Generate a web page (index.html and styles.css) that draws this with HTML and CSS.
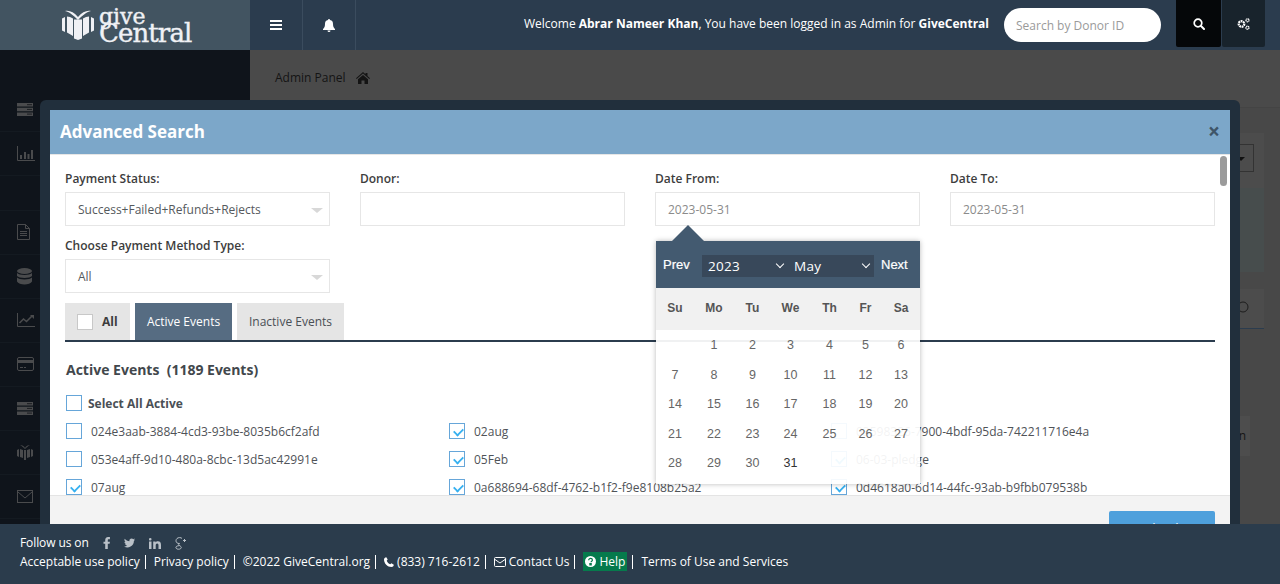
FILE: index.html
```html
<!DOCTYPE html>
<html lang="en">
<head>
<meta charset="utf-8">
<title>Advanced Search</title>
<link rel="stylesheet" href="styles.css">
</head>
<body>
<div class="page">
  <header class="topbar">
    <div class="brand">
      <svg class="brand-icon" width="32" height="30" viewBox="0 0 32 30"><path d="M3 1C7 0 12 2 16 7 20 2 25 0 29 1 24 2 20 6 16 10 12 6 8 2 3 1Z" fill="#f0f1f5"/><path d="M0 8.500 3 7v15l-3-1.500ZM5 6.500c2 0 4 .7 6 2V26l-6-3.500ZM12 9.500h8V28.500L16 30l-4-1.500ZM21 8.500c2-1.300 4-2 6-2v16L21 26ZM29 7l3 1.500v12L29 22Z" fill="#f0f1f5"/></svg>
      <div class="wordmark"><span>give</span><span class="central">Central</span></div>
    </div>
    <button class="tbtn"><svg width="12" height="12" viewBox="0 0 12 12"><path d="M0 1h12v2H0zM0 5h12v2H0zM0 9h12v2H0z" fill="#fff"/></svg></button>
    <button class="tbtn"><svg width="12" height="13" viewBox="0 0 12 13"><path d="M6 0a1 1 0 0 1 1 1c2.200.300 3 2 3 4 0 3 1 4 2 5v1H0v-1c1-1 2-2 2-5 0-2 .8-3.700 3-4a1 1 0 0 1 1-1ZM4.500 11.500h3a1.500 1.500 0 0 1-3 0Z" fill="#fff"/></svg></button>
    <div class="welcome">Welcome <b>Abrar Nameer Khan</b>, You have been logged in as Admin for <b>GiveCentral</b></div>
    <div class="donor-search">Search by Donor ID</div>
    <button class="sq sq-dark"><svg width="12" height="12" viewBox="0 0 12 12"><circle cx="5" cy="5" r="3.800" fill="none" stroke="#fff" stroke-width="1.700"/><path d="M8 8l3 3" stroke="#fff" stroke-width="2" stroke-linecap="round"/></svg></button>
    <button class="sq sq-mid"><svg width="13" height="12" viewBox="0 0 13 12"><circle cx="4.500" cy="6" r="2.800" fill="none" stroke="#fff" stroke-width="2.200" stroke-dasharray="1.800 .6"/><circle cx="10.500" cy="2.300" r="1.500" fill="none" stroke="#fff" stroke-width="1.300" stroke-dasharray="1.300 .4"/><circle cx="10.500" cy="9.700" r="1.500" fill="none" stroke="#fff" stroke-width="1.300" stroke-dasharray="1.300 .4"/></svg></button>
  </header>

  <div class="main">
    <aside class="sidebar">
      <div class="side-item"><svg width="16" height="13" viewBox="0 0 16 13"><path d="M0 0h16v3.500H0zM0 4.700h16v3.500H0zM0 9.400h16V13H0z" fill="#4a4b4d"/><path d="M10 1.700h5M10 6.400h5M10 11.100h5" stroke="#1a1d21"/></svg></div>
      <div class="side-item"><svg width="18" height="15" viewBox="0 0 18 15"><path d="M.5 0v14.500H18" fill="none" stroke="#4a4b4d"/><path d="M3 9h2v4H3zM7 6h2v7H7zM10.500 8h2v5h-2zM14 4h2v9h-2z" fill="#4a4b4d"/></svg></div>
      <div class="side-gap"></div>
      <div class="side-item"><svg width="13" height="16" viewBox="0 0 13 16"><path d="M.5.500h8l4 4v11H.5zM8.500.500v4h4M3 7.500h7M3 9.500h7M3 11.500h7" fill="none" stroke="#4a4b4d"/></svg></div>
      <div class="side-item"><svg width="15" height="17" viewBox="0 0 15 17"><ellipse cx="7.500" cy="3" rx="7.500" ry="3" fill="#4a4b4d"/><path d="M0 5c2 2.500 13 2.500 15 0v3c-2 2.500-13 2.500-15 0ZM0 9.500c2 2.500 13 2.500 15 0v4c-2 4-13 4-15 0Z" fill="#4a4b4d"/></svg></div>
      <div class="side-item"><svg width="18" height="14" viewBox="0 0 18 14"><path d="M.5 0v13.500H18" fill="none" stroke="#4a4b4d"/><path d="M2.500 10l4-4 3 2.500L15 3" fill="none" stroke="#4a4b4d" stroke-width="1.600"/><path d="M13 2h4v4z" fill="#4a4b4d"/></svg></div>
      <div class="side-item"><svg width="17" height="14" viewBox="0 0 17 14"><rect x=".5" y=".5" width="16" height="13" rx="1.500" fill="none" stroke="#4a4b4d"/><path d="M1 3h15v3H1zM3 10h3v1H3zM7 10h2v1H7z" fill="#4a4b4d"/></svg></div>
      <div class="side-item"><svg width="16" height="13" viewBox="0 0 16 13"><path d="M0 0h16v3.500H0zM0 4.700h16v3.500H0zM0 9.400h16V13H0z" fill="#4a4b4d"/><path d="M10 1.700h5M10 6.400h5M10 11.100h5" stroke="#1a1d21"/></svg></div>
      <div class="side-item"><svg width="16" height="16" viewBox="0 0 16 16"><path d="M3 1c2 0 4 1 5 3 1-2 3-3 5-3-2 1-3 2-5 4-2-2-3-3-5-4ZM0 6l2-1v8l-2-1ZM3 5l3 1v8l-3-1ZM7 6h2v10H7ZM10 6l3-1v8l-3 1ZM14 5l2 1v6l-2 1Z" fill="#4a4b4d"/></svg></div>
      <div class="side-item"><svg width="16" height="13" viewBox="0 0 16 13"><rect x=".5" y=".5" width="15" height="12" fill="none" stroke="#4a4b4d"/><path d="M1 2l7 6 7-6" fill="none" stroke="#4a4b4d"/></svg></div>
    </aside>
    <main class="content">
      <div class="crumb">Admin Panel <svg width="14" height="12" viewBox="0 0 14 12"><path d="M7 0l2.500 2.200V1h2v3l2.500 2.300-.7.700L7 1.600.7 7 0 6.300ZM2 7.200 7 3l5 4.200V12H8.500V8.500h-3V12H2Z" fill="#141414"/></svg></div>
      <div class="bg-panel bg-filter"><div class="bg-select"><i></i></div></div>
      <div class="bg-panel bg-stats"></div>
      <div class="bg-panel bg-tabs"><svg width="12" height="12" viewBox="0 0 12 12"><circle cx="6" cy="6" r="5" fill="none" stroke="#1c1c1c"/></svg></div>
      <div class="bg-btn">n</div>
    </main>
  </div>

  <section class="modal-frame">
    <div class="modal">
      <div class="modal-head">
        <h2>Advanced Search</h2>
        <span class="close">×</span>
      </div>
      <div class="modal-body">
        <div class="filters">
          <div class="field"><label>Payment Status:</label><div class="select">Success+Failed+Refunds+Rejects</div></div>
          <div class="field"><label>Donor:</label><div class="input"></div></div>
          <div class="field"><label>Date From:</label><div class="input muted">2023-05-31</div></div>
          <div class="field"><label>Date To:</label><div class="input muted">2023-05-31</div></div>
          <div class="field"><label>Choose Payment Method Type:</label><div class="select">All</div></div>
        </div>
        <div class="tabs">
          <div class="tab tab-all"><span class="box-gray"></span><b>All</b></div>
          <div class="tab tab-on">Active Events</div>
          <div class="tab tab-off">Inactive Events</div>
        </div>
        <h3 class="events-title">Active Events&nbsp; (1189 Events)</h3>
        <div class="select-all"><span class="cb"></span><b>Select All Active</b></div>
        <div class="events">
          <div class="ev"><span class="cb"></span>024e3aab-3884-4cd3-93be-8035b6cf2afd</div>
          <div class="ev"><span class="cb on"></span>02aug</div>
          <div class="ev"><span class="cb"></span>03598326-7900-4bdf-95da-742211716e4a</div>
          <div class="ev"><span class="cb"></span>053e4aff-9d10-480a-8cbc-13d5ac42991e</div>
          <div class="ev"><span class="cb on"></span>05Feb</div>
          <div class="ev"><span class="cb on"></span>06-03-pledge</div>
          <div class="ev"><span class="cb on"></span>07aug</div>
          <div class="ev"><span class="cb on"></span>0a688694-68df-4762-b1f2-f9e8108b25a2</div>
          <div class="ev"><span class="cb on"></span>0d4618a0-6d14-44fc-93ab-b9fbb079538b</div>
        </div>
        <div class="scroll-thumb"></div>
      </div>
      <div class="modal-foot"><button class="apply">Apply Filter</button></div>
    </div>

    <div class="calendar">
      <div class="cal-arrow"></div>
      <div class="cal-head">
        <span class="cal-nav">Prev</span>
        <div class="cal-selects">
          <span class="cal-sel">2023<i class="chev"></i></span>
          <span class="cal-sel">May<i class="chev"></i></span>
        </div>
        <span class="cal-nav">Next</span>
      </div>
      <div class="cal-dow"><span>Su</span><span>Mo</span><span>Tu</span><span>We</span><span>Th</span><span>Fr</span><span>Sa</span></div>
      <div class="cal-grid">
        <span></span><span>1</span><span>2</span><span>3</span><span>4</span><span>5</span><span>6</span>
        <span>7</span><span>8</span><span>9</span><span>10</span><span>11</span><span>12</span><span>13</span>
        <span>14</span><span>15</span><span>16</span><span>17</span><span>18</span><span>19</span><span>20</span>
        <span>21</span><span>22</span><span>23</span><span>24</span><span>25</span><span>26</span><span>27</span>
        <span>28</span><span>29</span><span>30</span><span class="today">31</span>
      </div>
    </div>
  </section>

  <footer class="footer">
    <div class="follow">Follow us on
      <svg class="soc" width="7" height="12" viewBox="0 0 8 14"><path d="M2.500 14V8H.5V5.500h2V3.500C2.500 1 4 0 5.800 0H8v2.500H6.500c-.8 0-1 .4-1 1v2H8L7.600 8H5.500v6Z" fill="#b9c0c7"/></svg>
      <svg class="soc" width="11" height="10" viewBox="0 0 13 11"><path d="M13 1.300c-.5.2-1 .4-1.500.4.500-.3 1-.8 1.200-1.400-.5.300-1.100.5-1.700.7a2.700 2.700 0 0 0-4.600 2.400C4.200 3.300 2.300 2.300.9.600c-.7 1.200-.4 2.800.8 3.600-.4 0-.8-.1-1.200-.3 0 1.300.9 2.400 2.100 2.700-.4.100-.8.100-1.200 0 .3 1.100 1.300 1.800 2.500 1.900A5.400 5.400 0 0 1 0 9.600 7.700 7.700 0 0 0 11.700 3c.5-.4 1-.9 1.300-1.700Z" fill="#b9c0c7"/></svg>
      <svg class="soc" width="12" height="11" viewBox="0 0 12 11"><path d="M0 3.500h2.500V11H0ZM1.250 0a1.300 1.300 0 1 1 0 2.600 1.300 1.300 0 0 1 0-2.600ZM4.200 3.500h2.400v1c.4-.7 1.200-1.200 2.300-1.200C11.300 3.300 12 4.800 12 7v4H9.500V7.500c0-1-.3-1.900-1.300-1.900-1.100 0-1.500.9-1.500 1.900V11H4.200Z" fill="#b9c0c7"/></svg>
      <svg class="soc" width="12" height="13" viewBox="0 0 12 13"><path d="M7 1.500C6.600.9 5.800.6 4.500.6 2.500.6 1 2 1 3.700s1.300 2.800 3 2.800c.2 0 .4 0 .5-.1M4.500 6.500c-1 .6-1 1.300 0 2 1.300.9 2 1.400 1.700 2.400-.4 1.200-2.500 1.600-4 1.100-1.400-.5-1.700-1.800-.7-2.600.8-.6 1.900-.8 3-.7M9.500 2v3M8 3.500h3" fill="none" stroke="#b9c0c7"/></svg>
    </div>
    <div class="links">
      <a>Acceptable use policy</a><a>Privacy policy</a><a>©2022 GiveCentral.org</a>
      <a><svg width="10" height="10" viewBox="0 0 10 10"><path d="M2.300.2 3.700 2.600 2.700 3.700c.6 1.500 2 3 3.600 3.600l1.100-1 2.400 1.400C9.700 9 8.600 10 7.500 10 3.500 10 0 6.500 0 2.500 0 1.400 1 .3 2.300.2Z" fill="#fff"/></svg> (833) 716-2612</a>
      <a><svg width="12" height="10" viewBox="0 0 12 10"><rect x=".5" y=".5" width="11" height="9" rx="1" fill="none" stroke="#fff"/><path d="M1 2.500l5 3.500 5-3.500" fill="none" stroke="#fff"/></svg> Contact Us</a>
      <a class="help-wrap"><span class="help"><svg width="11" height="11" viewBox="0 0 11 11"><circle cx="5.500" cy="5.500" r="5.500" fill="#fff"/><path d="M3.700 4.200c0-1.200 1-1.800 1.900-1.800s1.800.6 1.800 1.600c0 1.300-1.400 1.300-1.400 2.300M4.900 7.500h1.300v1.300H4.900z" fill="none" stroke="#067a4c" stroke-width="1.200"/></svg> Help</span></a>
      <a>Terms of Use and Services</a>
    </div>
  </footer>
</div>
</body>
</html>
```
FILE: styles.css
```css
* { box-sizing: border-box; }
html, body { margin: 0; height: 100%; overflow: hidden; }
body { font-family: "Open Sans", "Noto Sans", sans-serif; font-size: 12px; color: #4a4f55; }
button { border: 0; padding: 0; font: inherit; }
h2, h3 { margin: 0; }
.page { position: relative; width: 1280px; height: 584px; overflow: hidden; display: flex; flex-direction: column; background: #484848; }

.topbar { height: 50px; flex: none; display: flex; align-items: center; background: #2b3c4e; }
.brand { width: 250px; height: 50px; background: #425461; display: flex; align-items: center; padding-left: 62px; gap: 5px; }
.brand-icon { flex: none; }
.wordmark { display: flex; flex-direction: column; font-family: "DejaVu Serif", "Liberation Serif", serif; color: #f0f1f5; font-size: 22px; line-height: 15px; margin-top: 0; -webkit-text-stroke: .4px #f0f1f5; }
.wordmark .central { font-size: 26px; line-height: 18px; letter-spacing: -.9px; }
.tbtn { width: 53px; height: 50px; background: transparent; border-right: 1px solid #3b4c5e; display: flex; align-items: center; justify-content: center; }
.welcome { margin-left: auto; color: #fff; font-size: 12px; margin-top: -3px; }
.welcome b { font-weight: 700; }
.donor-search { width: 157px; height: 34px; margin: -1px 0 0 15px; background: #fff; border-radius: 17px; color: #9a9a9a; font-size: 12px; line-height: 36px; padding-left: 12px; }
.sq { width: 45px; height: 47px; align-self: flex-start; display: flex; align-items: center; justify-content: center; border-radius: 0 0 2px 2px; }
.sq-dark { background: #050709; margin-left: 15px; }
.sq-mid { background: #18232c; margin-left: 1px; width: 43px; margin-right: 15px; }

.main { flex: 1; display: flex; min-height: 0; }
.sidebar { width: 250px; flex: none; background: #0f141b; padding-top: 38px; display: flex; flex-direction: column; }
.side-item { height: 44px; display: flex; align-items: center; padding: 0 0 1px 17px; border-bottom: 1px solid #141a21; flex: none; }
.side-gap { height: 35px; flex: none; border-bottom: 1px solid #141a21; }
.content { flex: 1; padding-right: 16px; }
.crumb { height: 58px; padding: 0 0 2px 25px; margin-right: -16px; display: flex; align-items: center; gap: 10px; color: #141414; font-size: 12px; background: #4a4a4a; border-bottom: 1px solid #444; }
.bg-panel { background: #4c4c4c; margin-top: 25px; height: 55px; }
.bg-select { width: 100px; height: 28px; border: 1px solid #333; margin-right: 10px; margin-left: auto; position: relative; top: 11px; }
.bg-select i { position: absolute; right: 8px; top: 12px; border-style: solid; border-width: 4px 4px 0; border-color: #111 transparent transparent; }
.bg-stats { margin-top: 0; height: 84px; background: #474d4d; }
.bg-tabs { margin-top: 17px; height: 40px; border-bottom: 1px solid #2b3c4e; display: flex; justify-content: flex-end; align-items: center; padding: 0 15px 4px 0; }
.bg-btn { margin: 87px 14px 0 auto; width: 100px; height: 40px; background: #4d4d4d; color: #141414; font-size: 12px; line-height: 40px; text-align: right; padding-right: 4px; }

.modal-frame { position: absolute; left: 40px; top: 100px; width: 1200px; height: 470px; padding: 10px; background: #212f3c; border-radius: 6px; }
.modal { height: 100%; display: flex; flex-direction: column; background: #fff; }
.modal-head { height: 45px; flex: none; background: #7ca7c9; border-bottom: 1px solid #e6e6e6; display: flex; align-items: center; justify-content: space-between; padding: 0 10px; color: #fff; }
.modal-head h2 { font-size: 17px; font-weight: 700; line-height: 24px; }
.close { color: #3f5568; font-size: 21px; font-weight: 700; line-height: 20px; margin-top: -2px; }
.modal-body { position: relative; height: 340px; flex: none; overflow: hidden; padding: 0 15px; }
.filters { display: grid; grid-template-columns: repeat(4, 265px); column-gap: 30px; row-gap: 11px; padding-top: 15px; }
.field label { display: block; font-size: 12px; font-weight: 600; line-height: 17px; color: #3d3d3d; margin-bottom: 5px; }
.input, .select { width: 265px; height: 34px; border: 1px solid #e6e6e6; background: #fff; line-height: 33px; padding-left: 12px; font-size: 12px; color: #55595d; position: relative; }
.muted { color: #8b8b8b; }
.select::after { content: ""; position: absolute; right: 6px; top: 15px; border-style: solid; border-width: 5px 6.500px 0; border-color: #d8d8d8 transparent transparent; }
.tabs { display: flex; gap: 5px; height: 39px; margin-top: 10px; border-bottom: 2px solid #2b3c4e; }
.tab { height: 37px; background: #e5e5e5; display: flex; align-items: center; font-size: 12px; color: #4a4f55; }
.tab-all { padding: 0 12px; gap: 9px; width: 65px; color: #3d3d3d; }
.tab-on { background: #566c82; color: #fff; width: 97px; justify-content: center; }
.tab-off { width: 107px; justify-content: center; }
.box-gray { width: 16px; height: 16px; background: #fff; border: 1px solid #c8c8c8; }
.events-title { font-size: 14px; font-weight: 700; line-height: 18px; color: #42474c; margin: 19px 0 0 1px; }
.select-all { display: flex; align-items: center; gap: 6px; height: 28px; margin: 10px 0 0 1px; color: #4a4f55; }
.select-all b { font-weight: 700; }
.cb { width: 16px; height: 16px; flex: none; border: 1px solid #66a6d9; background: #fff; position: relative; }
.cb.on::after { content: ""; position: absolute; left: 5px; top: 2px; width: 5px; height: 8px; border: solid #35b0f0; border-width: 0 2.500px 2.500px 0; transform: rotate(45deg) scale(.9); }
.events { display: grid; grid-template-columns: 383px 382px 382px; grid-auto-rows: 28px; margin-left: 1px; }
.ev { display: flex; align-items: center; gap: 9px; color: #4f5358; white-space: nowrap; }
.scroll-thumb { position: absolute; right: 3px; top: 1px; width: 7px; height: 30px; border-radius: 4px; background: #9b9b9b; }
.modal-foot { flex: 1; background: #f3f3f3; border-top: 1px solid #e4e4e4; padding: 15px 15px 0 0; display: flex; justify-content: flex-end; }
.apply { width: 106px; height: 34px; background: #4ea0dc; color: #fff; font-size: 13px; border-radius: 2px; }

.calendar { position: absolute; left: 616px; top: 141px; width: 264px; height: 243px; background: rgba(255,255,255,.93); box-shadow: 0 0 5px rgba(0,0,0,.28); color: #555; font-family: "Liberation Sans", Arial, sans-serif; }
.cal-arrow { position: absolute; left: 16px; top: -16px; width: 0; height: 0; border-style: solid; border-width: 0 16px 16px; border-color: transparent transparent #435a70; }
.cal-head { height: 47px; background: #435a70; display: flex; align-items: center; padding-left: 7px; color: #fff; font-size: 13px; }
.cal-nav { width: 27px; white-space: nowrap; -webkit-text-stroke: .2px #fff; }
.cal-selects { display: flex; width: 172px; height: 22px; background: #38485a; margin: 2px 7px 0 12px; }
.cal-sel { flex: 1; display: flex; align-items: center; justify-content: space-between; padding: 0 5px 0 6px; font-family: "Open Sans", sans-serif; font-size: 13.500px; letter-spacing: .3px; }
.chev { width: 6px; height: 6px; border: solid #fff; border-width: 0 1.500px 1.500px 0; transform: rotate(45deg); margin-top: -3px; }
.cal-dow { height: 42px; background: #f1f1f1; display: grid; grid-template-columns: 38px 40px 37px 39px 39px 33px 38px; align-items: center; font-size: 12px; font-weight: 700; color: #555; text-align: center; }
.cal-dow span { margin-top: -2px; }
.cal-grid { display: grid; grid-template-columns: 38px 40px 37px 39px 39px 33px 38px; grid-auto-rows: 29.500px; padding-top: 1px; text-align: center; font-size: 12.500px; line-height: 29.500px; color: #666; }
.cal-grid .today { color: #333; }

.footer { position: absolute; left: 0; right: 0; bottom: 0; height: 60px; background: #2b3c4c; color: #fff; padding: 10px 20px 0; font-size: 12px; line-height: 18px; }
.follow { display: flex; align-items: center; height: 18px; letter-spacing: -.1px; }
.soc { margin-left: 14px; }
.links { display: flex; align-items: center; height: 19px; }
.links a { display: flex; align-items: center; gap: 3px; padding-right: 5px; margin-right: 8px; border-right: 1px solid #fff; height: 14px; white-space: nowrap; }
.links a:last-child { border: 0; }
.help { display: inline-flex; align-items: center; gap: 3px; background: #067a4c; padding: 0 2px; height: 19px; }
```
